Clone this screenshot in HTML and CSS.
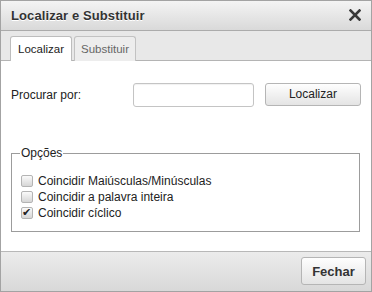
FILE: index.html
```html
<!doctype html>
<html>
<head>
<meta charset="utf-8">
<title>Localizar e Substituir</title>
<link rel="stylesheet" href="styles.css">
</head>
<body>

<div class="dialog">

  <!-- title bar -->
  <header class="titlebar">
    <span class="title">Localizar e Substituir</span>
    <span class="close" title="Fechar">
      <svg width="12" height="12" viewBox="0 0 12 12">
        <path d="M1.5 1.5 L10.5 10.5 M10.5 1.5 L1.5 10.5" stroke="#3a3a3a" stroke-width="2.6" stroke-linecap="square"/>
      </svg>
    </span>
  </header>

  <!-- tabs -->
  <nav class="tabs">
    <span class="tab active">Localizar</span>
    <span class="tab">Substituir</span>
  </nav>

  <!-- body -->
  <section class="content">
    <div class="find-row">
      <label class="find-label" for="findText">Procurar por:</label>
      <input class="find-input" id="findText" type="text">
      <button class="btn find-btn">Localizar</button>
    </div>

    <fieldset class="options">
      <legend>Opções</legend>
      <label class="opt"><input type="checkbox"> Coincidir Maiúsculas/Minúsculas</label>
      <label class="opt"><input type="checkbox"> Coincidir a palavra inteira</label>
      <label class="opt"><input type="checkbox" checked> Coincidir cíclico</label>
    </fieldset>
  </section>

  <!-- footer -->
  <footer class="footer">
    <button class="btn close-btn">Fechar</button>
  </footer>

</div>

</body>
</html>
```

FILE: styles.css
```css
/* ---------- page ---------- */
body{margin:0;background:#fff}

.dialog{
  width:372px;height:292px;
  box-sizing:border-box;
  border:1px solid #a3a3a3;
  display:flex;flex-direction:column;
  font:12px/15px "Liberation Sans",Arial,sans-serif;
  color:#222;
}

/* ---------- title bar ---------- */
.titlebar{
  height:29px;flex:none;
  border-bottom:1px solid #ababab;
  background:linear-gradient(#f4f4f4,#d9d9d9);
  display:flex;align-items:center;justify-content:space-between;
  padding:0 10px 0 10px;
}
.title{
  font:bold 13px/16px "Liberation Sans",Arial,sans-serif;
  letter-spacing:.1px;
  color:#333;
  text-shadow:0 1px 0 #fff;
}
.close{display:flex;margin-top:-1px}

/* ---------- tabs ---------- */
.tabs{
  height:30px;flex:none;box-sizing:border-box;
  background:#e8e8e8;
  border-bottom:1px solid #b4b4b4;
  display:flex;align-items:flex-end;gap:2px;
  padding-left:9px;
}
.tab{
  height:25px;box-sizing:border-box;
  padding:0 6px;
  display:flex;align-items:center;
  border:1px solid #c2c2c2;border-bottom:none;
  border-radius:3px 3px 0 0;
  background:#ededed;
  color:#666;
  font-size:11.5px;
  margin-bottom:-1px;
}
.tab.active{background:#fff;color:#222;border-color:#bdbdbd;padding:0 7px}

/* ---------- content ---------- */
.content{
  flex:1;
  background:#fff;
  padding:22px 10px 0 10px;
}
.find-row{display:flex;align-items:flex-start}
.find-label{width:123px;margin-top:5px}
.find-input{
  width:121px;height:24px;box-sizing:border-box;
  margin:0;
  border:1px solid #c4c4c4;border-radius:3px;
  box-shadow:inset 0 1px 1px rgba(0,0,0,.06);
  font:inherit;
}
.btn{
  box-sizing:border-box;
  border:1px solid #b5b5b5;border-radius:3px;
  background:linear-gradient(#fefefe,#e4e4e4);
  font:inherit;color:#222;
  padding:0;
}
.find-btn{width:97px;height:23px;margin-left:11px}

/* ---------- options ---------- */
.options{
  margin:39px 1px 0 0;
  padding:12px 0 10px 9px;
  border:1px solid #9c9c9c;
  box-shadow:1px 1px 0 #fff inset;
}
.options legend{padding:0 1px;margin-left:-1px;color:#222}
.opt{display:flex;align-items:center;height:16px;gap:5px;white-space:nowrap}
.opt input{
  appearance:none;-webkit-appearance:none;
  width:12px;height:12px;margin:0;flex:none;
  border:1px solid #b4b4b4;border-radius:2px;
  background:linear-gradient(#fafafa,#d6d6d6);
  position:relative;
}
.opt input:checked::before{
  content:"✔";
  position:absolute;left:0;top:-2px;
  font:11px/14px "DejaVu Sans",sans-serif;
  color:#222;
}

/* ---------- footer ---------- */
.footer{
  height:40px;flex:none;box-sizing:border-box;
  border-top:1px solid #b8b8b8;
  background:linear-gradient(#ececec,#d8d8d8);
  display:flex;justify-content:flex-end;align-items:flex-start;
  padding:5px 5px 0 0;
}
.close-btn{
  width:65px;height:28px;
  font:bold 13px "Liberation Sans",Arial,sans-serif;
  color:#333;
}
```
